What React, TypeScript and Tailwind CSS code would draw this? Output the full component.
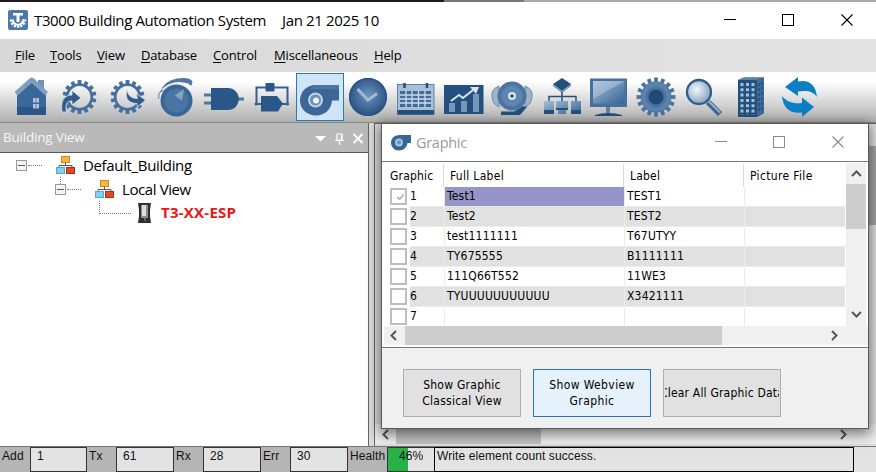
import { Fragment, type ReactNode } from 'react';

const SEGOE = "font-['Open_Sans','Noto_Sans',sans-serif]";
const TAHOMA = "font-['DejaVu_Sans_Condensed','DejaVu_Sans',sans-serif] [font-stretch:condensed]";
const ARIAL = "font-['Liberation_Sans',Arial,sans-serif]";

function gearPath(cx: number, cy: number, outer: number, root: number, teeth: number) {
  const pts: string[] = [];
  const step = (Math.PI * 2) / teeth;
  for (let i = 0; i < teeth; i++) {
    const a = i * step - Math.PI / 2;
    const corners: [number, number][] = [
      [root, -0.3],
      [outer, -0.25],
      [outer, 0.25],
      [root, 0.3],
    ];
    for (const [r, f] of corners) {
      pts.push(`${(cx + r * Math.cos(a + f * step)).toFixed(2)},${(cy + r * Math.sin(a + f * step)).toFixed(2)}`);
    }
  }
  return `M${pts.join('L')}Z`;
}

function Defs() {
  return (
    <svg className="absolute size-0" aria-hidden="true">
      <defs>
        <linearGradient id="steel" x1="0" y1="0" x2="0" y2="1">
          <stop offset="0" stopColor="#6d93bb" />
          <stop offset="1" stopColor="#2b5686" />
        </linearGradient>
        <linearGradient id="steelSoft" x1="0" y1="0" x2="1" y2="1">
          <stop offset="0" stopColor="#a4bdd7" />
          <stop offset="1" stopColor="#386494" />
        </linearGradient>
        <radialGradient id="ball" cx=".5" cy=".45" r=".55">
          <stop offset="0" stopColor="#6f94bb" />
          <stop offset=".6" stopColor="#41699a" />
          <stop offset="1" stopColor="#28527f" />
        </radialGradient>
        <radialGradient id="glass" cx=".4" cy=".4" r=".6">
          <stop offset="0" stopColor="#f2f6fa" />
          <stop offset="1" stopColor="#8aa6c3" />
        </radialGradient>
      </defs>
    </svg>
  );
}

const D = '#24507f';

const toolbarIcons: ReactNode[] = [
  <Fragment key="home">
    <path d="M30 7h6v12l-6-5z" fill="#6e93b9" />
    <path d="M9 22 23.500 9 38 22v20H9z" fill="#3a6899" />
    <path d="M9 34h29v8H9z" fill="#2b5686" />
    <path d="M6.500 19 21.500 5.500Q23.700 3.500 26 5.500L40 19l-2.500 3.500L23.700 10 9.500 22.500z" fill="#7f9fc1" />
    <path d="M25 25h6v4.500h-6zM25 31h6v4.500h-6z" fill="#b5c5d6" />
    <path d="M28 25v11" stroke="#4a74a1" strokeWidth=".8" />
  </Fragment>,
  <Fragment key="gear-in">
    <path d={gearPath(23.5, 24, 17, 13.7, 14) + 'M23.500 13a11 11 0 1 0 .01 0z'} fillRule="evenodd" fill="#456f9c" />
    <path d="M6 39C4 27 9 22 16 22v-4.500l9 7.500-9 7v-4c-5 0-7 3-5.500 11z" fill="#2f5c8b" stroke="#dfe4ea" strokeWidth=".8" />
  </Fragment>,
  <Fragment key="gear-out">
    <path d={gearPath(23.5, 24, 17, 13.7, 14) + 'M23.500 13a11 11 0 1 0 .01 0z'} fillRule="evenodd" fill="#456f9c" />
    <path d="M23.500 16c-.5 6 4 9.500 10 9.500l-1.500-5 9.500 6.500-8 7-.5-3.500c-9 0-13-6-9.500-14.500z" fill="#2f5c8b" stroke="#dfe4ea" strokeWidth=".8" />
  </Fragment>,
  <Fragment key="knob">
    <circle cx="24.500" cy="27.500" r="16" fill="#3a6696" />
    <circle cx="24.500" cy="27.500" r="12" fill="#4a75a3" />
    <path d="M32 16 22.500 22.500 30 27.500z" fill="#84a3c4" />
    <path d="M7.500 20Q12 7.500 25 5.500T40.500 8.500l-1 4Q22 5.500 11 18" fill="#4f779f" />
    <path d="M10 17Q21 6 37 11.500" fill="none" stroke="#f2f4f6" strokeWidth="1.500" />
    <path d="M7.500 19q-1.500 4-.5 7" fill="none" stroke="#8aa1ba" strokeWidth="1.500" />
  </Fragment>,
  <Fragment key="and-gate">
    <path d="M4 20.500h8v3H4zM4 28.500h8v3H4zM36 24.500h8v3h-8z" fill="#4f779f" />
    <path d="M11 15h17c6 0 10 4 11 11-1 7-5 11-11 11H11z" fill="#2a5787" />
  </Fragment>,
  <Fragment key="loop">
    <path d="M15 31H8.500V14.500h31V31H33" fill="none" stroke="#34608f" strokeWidth="2" />
    <rect x="17.500" y="10" width="9" height="8.500" rx="1" fill="#2a5787" />
    <path d="M13 23h16l6 7.500-5 8H13z" fill="#2a5787" />
    <circle cx="8" cy="31" r="1.500" fill="#34608f" />
    <circle cx="39.500" cy="31" r="1.500" fill="#34608f" />
  </Fragment>,
  <Fragment key="blower">
    <path d="M19.500 12H43v15.500h-7C35.500 36 29 42.500 20 42.500 11 42.500 4 36 4 27.500S10.500 12 19.500 12z" fill="#3b6695" />
    <path d="M20 12h23v4H14z" fill="#5f86ae" opacity=".5" />
    <circle cx="19.500" cy="27" r="7.500" fill="#c3d6e8" />
    <circle cx="19.500" cy="27" r="5.500" fill="#6b8fb6" />
    <circle cx="20" cy="27.500" r="3" fill="#f4f8fb" />
  </Fragment>,
  <Fragment key="clock">
    <circle cx="24" cy="24" r="19" fill="url(#ball)" />
    <path d="m13.500 16 10.500 11 9-6.500" fill="none" stroke="#a4bbd3" strokeWidth="3" />
    <circle cx="24" cy="24" r="18.200" fill="none" stroke="#2b5583" strokeWidth="1.500" />
  </Fragment>,
  <Fragment key="calendar">
    <rect x="5.500" y="11.500" width="36.500" height="30" fill="#a9bfd5" stroke="#5e83aa" />
    <path d="M5.500 37h36.500v4.500H5.500z" fill={D} />
    <path d="M12.500 10v5M35 10v5" stroke={D} strokeWidth="2.500" />
    <rect x="8" y="18" width="31" height="16" fill="#3f6c9b" />
    <path d="M14 18v16M20 18v16M26.500 18v16M33 18v16M8 22h31M8 26h31M8 30h31" stroke="#cfdbe7" strokeWidth="1.300" />
  </Fragment>,
  <Fragment key="trend">
    <rect x="4" y="12" width="39.500" height="29" fill="#24507f" />
    <path d="M9 30h6v9H9zM21 28h6v11h-6zM33 21h6v18h-6z" fill="#7898ba" />
    <path d="m11 28 8-6 4 3 10-8" fill="none" stroke="#dbe5ef" strokeWidth="2" />
    <path d="m30 14 9 0-3 7z" fill="#dbe5ef" />
  </Fragment>,
  <Fragment key="alarm">
    <path d="M11 13Q3 16 4 23q0 8 7 11zM37 13q8 3 7 10 0 8-7 11z" fill="#9db3c9" stroke="#6d8cad" />
    <path d="M13 38.500h13l9-5.500 4 1-7 8H13z" fill={D} />
    <circle cx="24" cy="23" r="14.500" fill="#4a74a1" />
    <circle cx="24" cy="23" r="10.500" fill="#5d85b0" />
    <circle cx="24" cy="23" r="4" fill="#dce6ef" />
    <circle cx="24" cy="23" r="1.800" fill={D} />
  </Fragment>,
  <Fragment key="flow">
    <path d="m26 5 9 6-9 7-9-7z" fill="#24507f" />
    <path d="M17 11v2l9 7 9-7v-2l-9 7z" fill="#7292b3" />
    <path d="M26 19v9M13 28v-4.500h27V28" fill="none" stroke={D} strokeWidth="1.500" />
    <path d="M8 28h10v13H8zM20 28h12v9H20zM22 37h8v4h-8zM35 28h10v13H35z" fill="url(#steelSoft)" />
    <path d="M8 37h10v4H8zM35 37h10v4H35zM20 35h12v2H20z" fill={D} />
  </Fragment>,
  <Fragment key="monitor">
    <path d="M22 34h4v7h-4z" fill="#5e83a8" />
    <path d="M11 42q13-4 27 0v1H11z" fill={D} />
    <path d="M6 5.500h37V34H6z" fill="#47709c" />
    <path d="M9 8h31.500v22.500H9z" fill="url(#steelSoft)" />
    <path d="M9 8h31.500L9 26z" fill="#c4d3e2" opacity=".45" />
  </Fragment>,
  <Fragment key="settings">
    <path d={gearPath(24, 24, 19.5, 15.5, 16)} fill="#4a739f" />
    <circle cx="24" cy="24" r="15" fill="#5a82aa" />
    <circle cx="24" cy="24" r="10.500" fill="#4a739e" />
    <circle cx="24" cy="24" r="7.500" fill="#204b79" />
  </Fragment>,
  <Fragment key="search">
    <path d="m28 29 12 12" stroke="#3d6794" strokeWidth="6" />
    <path d="m29 28.500 11 11" stroke="#9cb4cc" strokeWidth="2" />
    <circle cx="19" cy="19" r="12" fill="url(#glass)" stroke="#315b88" strokeWidth="2.300" />
  </Fragment>,
  <Fragment key="building">
    <path d="m10 7 6-2.500h20V40l-7 4H10z" fill="#24507f" />
    <path d="m10 7 6-2.500h20L29 7z" fill="#5c82a9" />
    <path d="m29 7 7-2.500V40l-7 4z" fill="#3f6b98" />
    <path d="M14 10v32M19.500 10v32M25 10v32" stroke="#a8c0d8" strokeWidth="3" strokeDasharray="3 2.300" />
    <path d="M31 10v30M34 9v28" stroke="#1f4b79" strokeWidth="1.300" strokeDasharray="3 2" />
  </Fragment>,
  <Fragment key="refresh">
    <path d="m9 14 13-10v4.500C33 6 40 12 41 24c-4-6-10-7-19-5.500V23z" fill="#0b7fc4" />
    <path d="M6 23c5 6 11 8 20 7v-5.500L38 34 26 44v-4.500C14 41 7 35 6 23z" fill="#0b7fc4" />
  </Fragment>,
];

function WindowButtons({ className }: { className: string }) {
  return (
    <svg className={className} width="130" height="13" viewBox="0 0 130 13" fill="none" stroke="currentColor" shapeRendering="crispEdges">
      <path d="M0 5.500h12M58.500.5h11v11h-11z" />
      <path d="m117.500.5 11 11m0-11-11 11" shapeRendering="auto" strokeWidth="1.100" />
    </svg>
  );
}

function Chevron({ dir, className = '' }: { dir: 'up' | 'down' | 'left' | 'right'; className?: string }) {
  const d = { up: 'm1 8 4.500-4.500L10 8', down: 'm1 3 4.500 4.500L10 3', left: 'M8 1 3.500 5.500 8 10', right: 'm3 1 4.500 4.500L3 10' }[dir];
  return (
    <svg className={className} width="11" height="11" viewBox="0 0 11 11" fill="none" stroke="#555" strokeWidth="2">
      <path d={d} />
    </svg>
  );
}

function NodeIcon() {
  return (
    <svg width="19" height="18" viewBox="0 0 19 18">
      <path d="M9.500 6v4M3 12V9.500h13V12" fill="none" stroke="#555" />
      <rect x="5.500" y=".5" width="8" height="6" fill="#f7b63b" stroke="#c98a1f" />
      <rect x=".5" y="11.500" width="8" height="6" fill="#7fd0f5" stroke="#5aa6cc" />
      <rect x="10.500" y="11.500" width="8" height="6" fill="#e24a20" stroke="#a8300f" />
    </svg>
  );
}

function Expander() {
  return (
    <span className="flex size-[11px] items-center justify-center border border-[#999] bg-[#f4f4f4]">
      <span className="h-px w-[7px] bg-[#3c5f96]" />
    </span>
  );
}

const menus = [
  { key: 'F', rest: 'ile', w: 'w-[35px]' },
  { key: 'T', rest: 'ools', w: 'w-[47px]' },
  { key: 'V', rest: 'iew', w: 'w-[44px]' },
  { key: 'D', rest: 'atabase', w: 'w-[72px]' },
  { key: 'C', rest: 'ontrol', w: 'w-[61px]' },
  { key: 'M', rest: 'iscellaneous', w: 'w-[100px]' },
  { key: 'H', rest: 'elp', w: 'w-[40px]' },
];

const rows = [
  ['1', 'Test1', 'TEST1'],
  ['2', 'Test2', 'TEST2'],
  ['3', 'test1111111', 'T67UTYY'],
  ['4', 'TY675555', 'B1111111'],
  ['5', '111Q66T552', '11WE3'],
  ['6', 'TYUUUUUUUUUUU', 'X3421111'],
  ['7', '', ''],
];

function BuildingView() {
  return (
    <section className="flex w-[369px] flex-col border-r border-[#666]">
      <div className={`flex h-[29px] items-center bg-[#b9b9b9] pl-[3px] ${SEGOE}`}>
        <span className="text-[13.500px] tracking-[-0.2px] text-[#f6f6f6]">Building View</span>
        <svg className="ml-auto mr-[4px]" width="50" height="14" viewBox="0 0 50 14" fill="none" stroke="#fff">
          <path d="M1 5h11l-5.500 5.500z" fill="#fff" stroke="none" />
          <path d="M23 3h5v6h-5zM21 9.500h9M25.500 9v5M27.500 3v6" strokeWidth="1.200" />
          <path d="m39.500 3 9 9m0-9-9 9" strokeWidth="1.800" />
        </svg>
      </div>
      <div className={`flex flex-1 flex-col border-t border-[#555] bg-white ${SEGOE}`}>
        <div className="flex h-6 items-center pl-4">
          <Expander />
          <span className="ml-px w-[14px] border-t border-dotted border-[#777]" />
          <span className="ml-[14px]"><NodeIcon /></span>
          <span className="ml-2 text-[15px] tracking-[-0.35px]">Default_Building</span>
        </div>
        <div className="flex h-6 items-center pl-[55px]">
          <span className="flex flex-col items-center">
            <span className="h-[7px] w-px border-l border-dotted border-[#777]" />
            <Expander />
            <span className="h-[7px]" />
          </span>
          <span className="ml-px w-[14px] border-t border-dotted border-[#777]" />
          <span className="ml-[14px]"><NodeIcon /></span>
          <span className="ml-2 text-[15px] tracking-[-0.4px]">Local View</span>
        </div>
        <div className="flex h-[23px] items-center pl-[99px]">
          <span className="mb-[10px] h-[13px] w-[32px] border-b border-l border-dotted border-[#777]" />
          <svg className="ml-[6px]" width="15" height="22" viewBox="0 0 15 22">
            <path d="M1 1h13l-1 7v6l1 7H1l1-7V8z" fill="#2e2e2e" />
            <path d="M4 3h7v13H4z" fill="#8d8d8d" />
            <path d="M5 3h4v11H5z" fill="#dedede" />
            <path d="M7 16h2v3H7z" fill="#4f7a3d" />
          </svg>
          <span className="ml-[9px] text-[15px] font-bold tracking-[0.25px] text-[#f01414]">T3-XX-ESP</span>
        </div>
      </div>
    </section>
  );
}

function GraphicTable() {
  return (
    <div className={`flex h-[187px] border-b border-t border-[#777] bg-white pl-[2px] pt-px ${TAHOMA}`}>
      <div className="flex w-full flex-col">
        <div className="flex h-[163px]">
          <div className="w-[461px]">
            <div className="flex h-6 pt-[1px] text-[12px] leading-6 tracking-[0.2px]">
              <span className="w-[60px] border-r border-[#ddd] pl-[6px]">Graphic</span>
              <span className="w-[180px] border-r border-[#ddd] pl-[6px] tracking-[0.3px]">Full Label</span>
              <span className="w-[120px] border-r border-[#ddd] pl-[6px]">Label</span>
              <span className="pl-[6px] tracking-[0.35px]">Picture File</span>
            </div>
            <div className="h-[139px] overflow-hidden">
              {rows.map(([n, full, label], i) => (
                <div key={n} className="flex h-5 text-[12px] leading-[18px] tracking-[0.2px]">
                  <span className="flex w-[26px] shrink-0 items-start pl-[6px] pt-px">
                    <span className="flex size-[17px] items-center justify-center border-2 border-[#bdbdbd] bg-white">
                      {i === 0 && (
                        <svg className="ml-1" width="9" height="8" viewBox="0 0 10 9" fill="none" stroke="#b5b5b5" strokeWidth="2"><path d="m1.500 4.500 2.500 2.500L8.500 1.500" /></svg>
                      )}
                    </span>
                  </span>
                  <span className={`flex flex-1 border-b border-[#ececec] ${i % 2 ? 'bg-[#e1e1e1]' : 'bg-white'}`}>
                    <span className="w-[35px] border-r border-[#ececec]">{n}</span>
                    <span className={`w-[180px] border-r border-[#ececec] pl-[2px] ${i === 0 ? 'bg-[#9695c8]' : ''}`}>{full}</span>
                    <span className="w-[120px] border-r border-[#ececec] pl-[2px]">{label}</span>
                  </span>
                </div>
              ))}
            </div>
          </div>
          <div className="ml-px flex w-[20px] flex-col items-center bg-[#f0f0f0]">
            <Chevron dir="up" className="mt-[5px]" />
            <div className="mt-[5px] h-[45px] w-full bg-[#cdcdcd]" />
            <Chevron dir="down" className="mb-[6px] mt-auto" />
          </div>
        </div>
        <div className="flex h-[19px] items-center bg-[#f0f0f0]">
          <Chevron dir="left" className="ml-[4px]" />
          <div className="ml-[6px] h-full w-[317px] bg-[#cdcdcd]" />
          <Chevron dir="right" className="ml-[107px]" />
        </div>
      </div>
    </div>
  );
}

function GraphicDialog() {
  const btn = 'flex h-12 w-[118px] items-center justify-center overflow-hidden whitespace-nowrap border text-center text-[12px] leading-4';
  return (
    <div className="absolute left-[381px] top-[123px] flex h-[306px] w-[488px] flex-col border border-[#5a5a5a] bg-[#f0f0f0] shadow-[0_3px_12px_2px_rgba(0,0,0,0.5)]">
      <div className={`flex h-[37px] items-center bg-white pl-[9px] ${SEGOE}`}>
        <svg width="20" height="17" viewBox="0 0 20 17">
          <path d="M8.500 1H20v8h-3.500c-.5 4.500-4 7.500-8.500 7.500-4.500 0-8-3.500-8-8S4 1 8.500 1z" fill="#376799" />
          <circle cx="8" cy="8.500" r="3.900" fill="#a9c5e2" />
          <circle cx="8" cy="8.500" r="2" fill="#6690bb" />
        </svg>
        <span className="ml-[5px] text-[14.500px] tracking-[-0.3px] text-[#999]">Graphic</span>
        <WindowButtons className="ml-auto mr-[23px] text-[#8a8a8a]" />
      </div>
      <GraphicTable />
      <div className={`flex gap-3 pl-[21px] pt-[21px] ${TAHOMA}`}>
        <button className={`${btn} border-[#adadad] bg-[#e1e1e1] tracking-[0.25px]`}>Show Graphic<br />Classical View</button>
        <button className={`${btn} border-[#2a74b5] bg-[#e5f1fb] tracking-[0.4px]`}>Show Webview<br />Graphic</button>
        <button className={`${btn} border-[#adadad] bg-[#e1e1e1] px-px tracking-[0.2px]`}>
          <span className="flex w-[114px] justify-center overflow-hidden"><span>Clear All Graphic Data</span></span>
        </button>
      </div>
    </div>
  );
}

const statusFields = [
  { label: 'Add', value: '1', lw: 'w-[30px]', vw: 'w-[57px]' },
  { label: 'Tx', value: '61', lw: 'w-[29px]', vw: 'w-[58px]' },
  { label: 'Rx', value: '28', lw: 'w-[29px]', vw: 'w-[58px]' },
  { label: 'Err', value: '30', lw: 'w-[29px]', vw: 'w-[58px]' },
];

function StatusBar() {
  return (
    <footer className={`flex h-[26px] border-t border-[#777] bg-[#e3e3e3] text-[12px] leading-[18px] tracking-[0.1px] text-[#111] ${ARIAL}`}>
      {statusFields.map((f) => (
        <Fragment key={f.label}>
          <span className={`${f.lw} bg-[#b5b5b5] pl-[2px]`}>{f.label}</span>
          <span className={`${f.vw} border border-[#333] bg-[#e3e3e3] pl-[6px] leading-[17px]`}>{f.value}</span>
        </Fragment>
      ))}
      <span className="w-[39px] bg-[#b5b5b5] pl-[2px]">Health</span>
      <span className="flex w-[47px] border border-r-0 border-[#333] bg-[linear-gradient(90deg,#26b247_20px,#e3e3e3_20px)] pl-[11px] leading-[16px]">46%</span>
      <span className="w-[420px] border border-black pl-[2px] leading-[16px]">Write element count success.</span>
    </footer>
  );
}

export default function App() {
  return (
    <div className="relative flex h-[472px] w-[876px] flex-col overflow-hidden bg-white text-black">
      <Defs />
      <div className="h-[2px] bg-[linear-gradient(90deg,#1c1a1c_444px,#777_444px,#777_524px,#aaa_524px)]" />
      <header className={`flex h-[37px] items-center bg-white pl-2 ${SEGOE}`}>
        <svg className="-mt-px" width="20" height="20" viewBox="0 0 20 20">
          <rect width="20" height="20" rx="2" fill="#4b79ab" />
          <path d="M3.500 9.500a6.500 6.500 0 0 0 13 0" fill="none" stroke="#fff" strokeWidth="3.600" strokeDasharray="2 1" />
          <path d="M4.800 9.500a5.200 5.200 0 0 0 10.400 0" fill="none" stroke="#fff" strokeWidth="2" />
          <path d="M5 3h10v2.500h-3.500V12h-3V5.500H5z" fill="#fff" />
        </svg>
        <span className="ml-[6px] w-[248px] whitespace-nowrap text-[15px] tracking-[-0.38px]">T3000 Building Automation System</span>
        <span className="whitespace-nowrap text-[15px] tracking-[-0.35px]">Jan 21 2025 10</span>
        <WindowButtons className="ml-auto mr-[22px]" />
      </header>
      <nav className={`flex h-[33px] items-center bg-[linear-gradient(90deg,#d8d8d8,#e3e3e3)] pl-[15px] text-[13px] ${SEGOE}`}>
        {menus.map((m) => (
          <span key={m.rest} className={`${m.w} shrink-0 whitespace-nowrap tracking-[-0.15px]`}>
            <span className="underline underline-offset-2">{m.key}</span>{m.rest}
          </span>
        ))}
      </nav>
      <div className="flex h-[51px] border-b border-[#888] bg-[linear-gradient(180deg,#fefefe_20%,#b0b0b0)] pl-2 pt-px">
        {toolbarIcons.map((icon, i) => (
          <div key={i} className={`size-12 ${i === 6 ? 'bg-[#cfe4f6] outline outline-1 -outline-offset-1 outline-[#2a79b8]' : ''}`}>
            <svg width="48" height="48" viewBox="0 0 48 48">{icon}</svg>
          </div>
        ))}
      </div>
      <main className="flex h-[323px] bg-[#dcdcdc]">
        <BuildingView />
        <div className="ml-[5px] flex flex-1 flex-col border-l border-t border-[#666] bg-[#dedede]">
          <div className="flex flex-1">
            <div className="ml-auto flex w-[9px] flex-col bg-[#e4e4e4] pt-[22px]">
              <div className="h-[79px] bg-[#a8a8a8]" />
            </div>
          </div>
          <div className="mb-[2px] flex h-[20px] items-center bg-[#ececec] pl-[5px]">
            <Chevron dir="left" />
            <div className="ml-[5px] h-full w-[145px] bg-[#c0c0c0]" />
            <Chevron dir="right" className="ml-auto mr-[27px]" />
          </div>
        </div>
      </main>
      <StatusBar />
      <GraphicDialog />
    </div>
  );
}
